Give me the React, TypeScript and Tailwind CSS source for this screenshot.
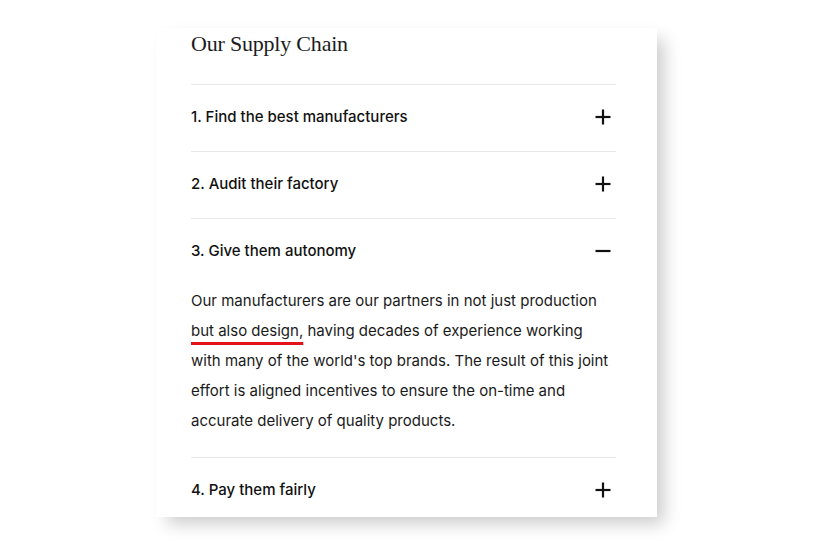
import React, { useState } from "react";

const items = [
    { title: "1. Find the best manufacturers" },
    { title: "2. Audit their factory" },
    { title: "3. Give them autonomy" },
    { title: "4. Pay them fairly" },
];

const Plus = ({ open }: { open: boolean }) => (
    <svg width="16" height="16" viewBox="0 0 16 16" className="shrink-0">
        <path d="M0.5 8h15" stroke="#111" strokeWidth="2.2" />
        {!open && <path d="M8 0.5v15" stroke="#111" strokeWidth="2.2" />}
    </svg>
);

const App = () => {
    const [open, setOpen] = useState(2);

    return (
        <div className="min-h-[550px] bg-white pt-[28px]" style={{ fontFamily: "Inter, 'Noto Sans', sans-serif" }}>
            <div className="mx-auto w-[501px] h-[489px] overflow-hidden bg-white pl-[35px] pr-[41px] shadow-[9px_9px_16px_-2px_rgba(0,0,0,0.2)]">
                <h2
                    className="h-[56px] pt-[3px] flex items-start text-[22px] leading-[26px] text-[#1c1c1c] tracking-[-0.2px]"
                    style={{ fontFamily: "'Liberation Serif', 'DejaVu Serif', serif" }}
                >
                    Our Supply Chain
                </h2>
                {items.map((item, index) => (
                    <div key={index} className="border-t border-[#e8e8e8]">
                        <div
                            className={
                                index === items.length - 1
                                    ? "flex items-center justify-between cursor-pointer pt-[22px] pb-[16px] pr-[5px]"
                                    : "flex items-center justify-between cursor-pointer pt-[22px] pb-[24px] pr-[5px]"
                            }
                            onClick={() => setOpen(open === index ? -1 : index)}
                        >
                            <span className="text-[15px] leading-[20px] font-medium text-[#111]">
                                {item.title}
                            </span>
                            <Plus open={open === index} />
                        </div>
                        {open === index && (
                            <p className="text-[15px] leading-[30px] text-[#1a1a1a] pb-[21px] mt-[1px]">
                                Our manufacturers are our partners in not just production{" "}
                                <span className="underline decoration-[#e3111b] decoration-[3px] underline-offset-[6px]">
                                    but also design,
                                </span>{" "}
                                having decades of experience working with many of the world's top brands. The result of this joint effort is aligned incentives to ensure the on-time and accurate delivery of quality products.
                            </p>
                        )}
                    </div>
                ))}
            </div>
        </div>
    );
};

export default App;
